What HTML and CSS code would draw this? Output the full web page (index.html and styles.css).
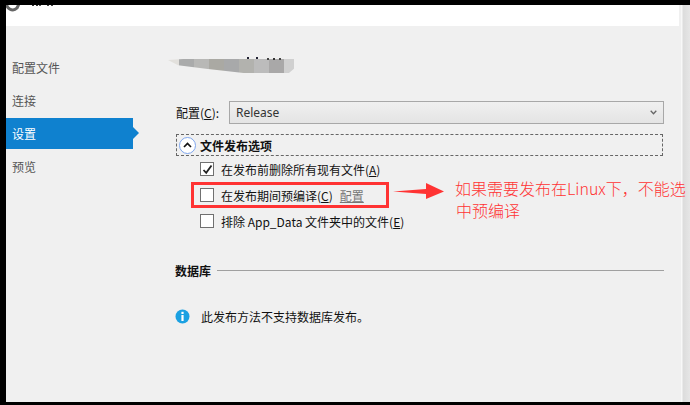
FILE: index.html
```html
<!DOCTYPE html>
<html lang="zh-CN">
<head>
<meta charset="utf-8">
<title>发布</title>
<link rel="stylesheet" href="styles.css">
</head>
<body>
<div class="screen">
  <div class="page">
    <header class="header">
      <svg class="logo" width="14" height="7" viewBox="0 0 14 7"><path d="M1 -3 A6 6 0 0 0 11 3 L13 -1" fill="none" stroke="#666" stroke-width="3"/></svg>
      <span class="header-bits"></span>
    </header>
    <div class="body">
      <nav class="nav">
        <a class="nav-item">配置文件</a>
        <a class="nav-item">连接</a>
        <a class="nav-item selected">设置</a>
        <a class="nav-item">预览</a>
      </nav>
      <main class="main">
        <div class="heading"><div class="blur"></div></div>
        <div class="config-row">
          <label class="config-label">配置(<u>C</u>):</label>
          <div class="select">
            <span>Release</span>
            <svg width="7" height="5" viewBox="0 0 7 5"><path d="M0.7 0.8 L3.5 3.8 L6.3 0.8" fill="none" stroke="#666" stroke-width="1.3"/></svg>
          </div>
        </div>
        <div class="expander">
          <span class="expander-btn">
            <svg width="9" height="6" viewBox="0 0 9 6"><path d="M1 5 L4.5 1.5 L8 5" fill="none" stroke="#111" stroke-width="1.7"/></svg>
          </span>
          <strong>文件发布选项</strong>
        </div>
        <div class="option">
          <span class="check">
            <svg width="11" height="11" viewBox="0 0 11 11"><path d="M1.5 6 L4.2 8.8 L9.5 1.5" fill="none" stroke="#222" stroke-width="1.8"/></svg>
          </span>
          <span>在发布前删除所有现有文件(<u>A</u>)</span>
        </div>
        <div class="option">
          <span class="check"></span>
          <span>在发布期间预编译(<u>C</u>)</span>
          <a class="link">配置</a>
        </div>
        <div class="option">
          <span class="check"></span>
          <span>排除 App_Data 文件夹中的文件(<u>E</u>)</span>
        </div>
        <div class="section">
          <strong>数据库</strong>
          <span class="rule"></span>
        </div>
        <div class="info">
          <svg width="15" height="15" viewBox="0 0 15 15"><circle cx="7.5" cy="7.5" r="7" fill="#1ba1e2"/><rect x="6.4" y="2.8" width="2.2" height="2.2" fill="#fff"/><rect x="6.4" y="6" width="2.2" height="6" fill="#fff"/></svg>
          <span>此发布方法不支持数据库发布。</span>
        </div>
      </main>
      <div class="red-box"></div>
      <svg class="red-arrow" width="52" height="18" viewBox="0 0 52 18"><path d="M0 8.5 L33 6 L33 0 L51 8.5 L33 16 L33 11 Z" fill="#f33"/></svg>
      <p class="note">如果需要发布在Linux下，不能选<br><span class="note-second">中预编译</span></p>
    </div>
  </div>
  <div class="rail"></div>
</div>
</body>
</html>
```

FILE: styles.css
```css
* { box-sizing: border-box; }
html, body { margin: 0; padding: 0; background: #000; }
body { width: 690px; height: 405px; overflow: hidden; }
u { text-underline-offset: 1px; }

.screen {
  width: 690px;
  height: 405px;
  display: flex;
  padding: 5px 0 3px 6px;
  background: #000;
  font-family: "Noto Sans CJK SC", "Noto Sans", sans-serif;
  font-size: 12px;
  color: #111;
}
.page { width: 675px; display: flex; flex-direction: column; background: #f0f0f0; }
.rail {
  flex: 1;
  background: linear-gradient(to right, #f8f8f8 0, #f8f8f8 1px, #dcdcdc 2px, #e6e6e6 100%);
}

.header { position: relative; height: 21px; margin-right: 2px; background: #fff; flex: none; }
.logo { position: absolute; left: 0; top: 0; }
.header-bits {
  position: absolute; left: 26px; top: 0; width: 2px; height: 1px;
  background: #333;
  box-shadow: 4px 0 #333, 7px 0 #555, 15px 0 #444, 19px 0 #444;
}

.body { position: relative; flex: 1; display: flex; align-items: flex-start; }

.nav { width: 127px; flex: none; margin-top: 26px; display: flex; flex-direction: column; gap: 2px; }
.nav-item {
  position: relative;
  height: 31px;
  line-height: 31px;
  padding-left: 6px;
  color: #555;
}
.nav-item.selected { background: #0f81cf; color: #fff; }
.nav-item.selected::after {
  content: "";
  position: absolute;
  left: 100%;
  top: 9px;
  border-left: 6px solid #0f81cf;
  border-top: 6px solid transparent;
  border-bottom: 6px solid transparent;
}

.main { flex: 1; margin-left: 35px; padding: 33px 17px 0 0; display: flex; flex-direction: column; }

.heading { position: relative; width: 126px; height: 14px; }
.heading::after {
  content: "";
  position: absolute;
  left: 79px;
  top: -2px;
  width: 2px;
  height: 2px;
  background: #223;
  box-shadow: 9px 0 #223, 20px 1px #444, 26px 1px #333, 32px 1px #444;
}
.blur {
  height: 14px;
  clip-path: polygon(0 8%, 12% 0, 100% 0, 100% 70%, 96% 100%, 60% 100%, 30% 70%, 8% 45%);
  background: linear-gradient(to right,
    #e2e0dc 0 11px, #aaabab 11px 26px, #b8b8b6 26px 41px, #aaa9a3 41px 56px,
    #a8a9aa 56px 71px, #b2b2ae 71px 86px, #bcbcbc 86px 101px, #a9a8a8 101px 116px, #d0d0d0 116px 126px);
}

.config-row { display: flex; align-items: center; margin: 28px 0 0 8px; height: 23px; }
.config-label { width: 53px; flex: none; }
.select {
  flex: 1;
  height: 23px;
  padding: 0 6px 0 6px;
  display: flex;
  align-items: center;
  justify-content: space-between;
  border: 1px solid #a8a8a8;
  background: linear-gradient(#f0f0f0, #e4e4e4);
  font-family: "Noto Sans", sans-serif;
  color: #333;
}

.expander {
  display: flex;
  align-items: center;
  gap: 4px;
  height: 22px;
  margin: 10px 1px 0 8px;
  padding-left: 2px;
  border: 1px dashed #666;
}
.expander strong { font-weight: 700; }
.expander-btn {
  width: 17px;
  height: 17px;
  flex: none;
  display: flex;
  align-items: center;
  justify-content: center;
  border: 1px solid #7ea6ee;
  border-radius: 50%;
  background: #fff;
}

.option { display: flex; align-items: center; height: 26px; padding-left: 32px; }
.check {
  width: 14px;
  height: 14px;
  flex: none;
  margin-right: 7px;
  display: flex;
  align-items: center;
  justify-content: center;
  border: 1px solid #707070;
  background: #fff;
}
.link { margin-left: 7px; color: #777; text-decoration: underline; }

.section { display: flex; align-items: center; gap: 6px; height: 18px; margin: 27px 0 0 7px; }
.section strong { font-weight: 700; }
.rule { flex: 1; height: 1px; background: #a0a0a0; }

.info { display: flex; align-items: center; gap: 11px; height: 18px; margin: 28px 0 0 7px; }

.red-box {
  position: absolute;
  left: 185px;
  top: 156px;
  width: 198px;
  height: 26px;
  border: 3px solid #f33;
}
.red-arrow { position: absolute; left: 387px; top: 157px; }
.note {
  position: absolute;
  left: 449px;
  top: 151px;
  margin: 0;
  width: 240px;
  font-size: 16px;
  font-weight: 300;
  line-height: 22px;
  color: #f33;
  white-space: nowrap;
}
.note-second { margin-left: 1px; }
```
